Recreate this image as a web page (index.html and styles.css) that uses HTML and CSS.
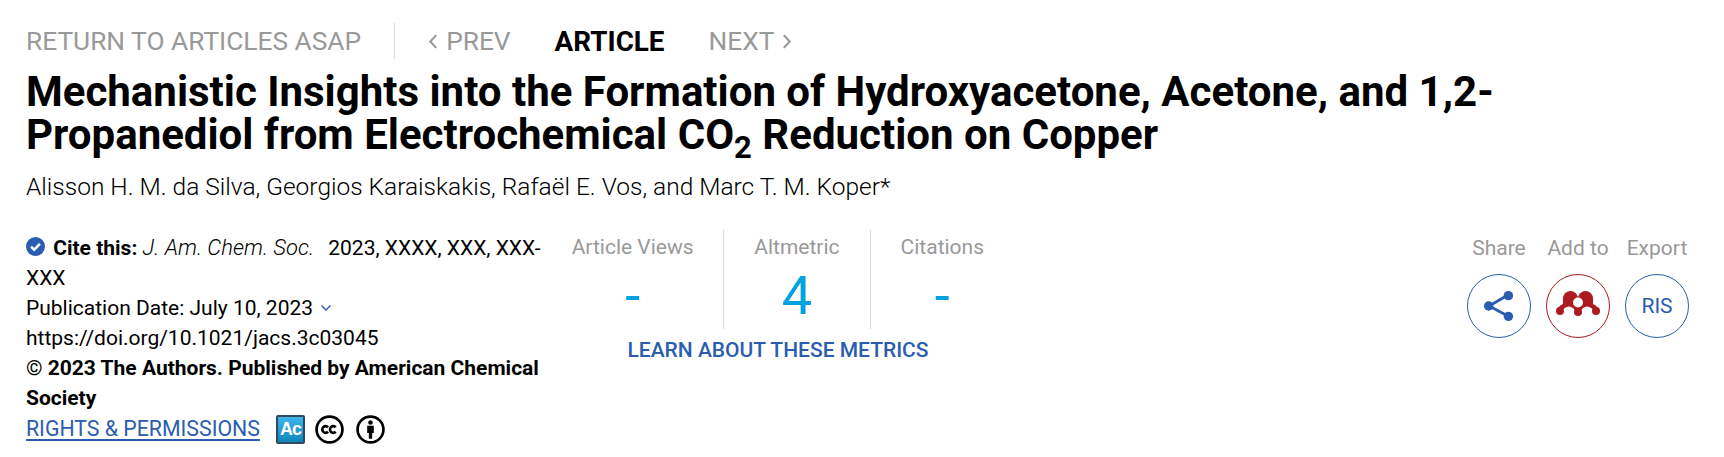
FILE: index.html
```html
<!DOCTYPE html>
<html lang="en">
<head>
    <meta charset="UTF-8">
    <title>Mechanistic Insights into the Formation of Hydroxyacetone, Acetone, and 1,2-Propanediol</title>
    <link rel="stylesheet" href="styles.css">
</head>
<body>
    <!-- Article nav -->
    <div class="article-nav">
        <a class="nav-return">RETURN TO ARTICLES ASAP</a>
        <div class="nav-pager">
            <a class="nav-link">
                <svg class="nav-chevron" viewBox="0 0 9 16"><path d="M7.5 2 2 8l5.5 6"/></svg>
                PREV
            </a>
            <a class="nav-current">ARTICLE</a>
            <a class="nav-link">
                NEXT
                <svg class="nav-chevron" viewBox="0 0 9 16"><path d="M1.5 2 7 8l-5.5 6"/></svg>
            </a>
        </div>
    </div>

    <h1 class="title">Mechanistic Insights into the Formation of Hydroxyacetone, Acetone, and 1,2-Propanediol from Electrochemical CO<sub>2</sub> Reduction on Copper</h1>
    <p class="authors">Alisson H. M. da Silva, Georgios Karaiskakis, Rafaël E. Vos, and Marc T. M. Koper*</p>

    <div class="meta-row">
        <!-- Citation -->
        <div class="cite">
            <div>
                <svg class="cite-check" viewBox="0 0 18 18">
                    <circle cx="9" cy="9" r="9"/>
                    <path d="M4.8 9.2 7.8 12l5.4-5.6"/>
                </svg>
                <b class="cite-label">Cite this:</b> <i>J. Am. Chem. Soc.</i> <span class="cite-ref">2023, XXXX, XXX, XXX-XXX</span>
            </div>
            <div>Publication Date: July 10, 2023
                <svg class="date-chevron" viewBox="0 0 12 8"><path d="M1.5 1.5 6 6l4.5-4.5"/></svg>
            </div>
            <div>https://doi.org/10.1021/jacs.3c03045</div>
            <div>© <b>2023 The Authors. Published by American Chemical Society</b></div>
            <div class="rights">
                <a class="rights-link">RIGHTS &amp; PERMISSIONS</a>
                <span class="ac-badge">Ac</span>
                <svg class="license-icon" viewBox="0 0 28 28">
                    <circle class="ring" cx="14" cy="14" r="12.500"/>
                    <path class="ring" d="M12.600 11.800a3.200 3.200 0 1 0 0 4.400M20 11.800a3.200 3.200 0 1 0 0 4.400"/>
                </svg>
                <svg class="license-icon" viewBox="0 0 28 28">
                    <circle class="ring" cx="14" cy="14" r="12.500"/>
                    <circle class="solid" cx="14" cy="7.200" r="2.200"/>
                    <path class="solid" d="M10.800 10.300h6.400v7h-1.600V23h-3.200v-5.700h-1.600z"/>
                </svg>
            </div>
        </div>

        <!-- Metrics -->
        <div class="metrics">
            <div class="metrics-row">
                <div class="metric metric-views">
                    <div class="metric-label">Article Views</div>
                    <div class="metric-value">-</div>
                </div>
                <div class="metric metric-alt">
                    <div class="metric-label">Altmetric</div>
                    <div class="metric-value">4</div>
                </div>
                <div class="metric metric-cites">
                    <div class="metric-label">Citations</div>
                    <div class="metric-value">-</div>
                </div>
            </div>
            <a class="metrics-link">LEARN ABOUT THESE METRICS</a>
        </div>

        <!-- Share / add / export -->
        <div class="actions">
            <div class="action">
                <div class="action-label">Share</div>
                <div class="action-btn">
                    <svg class="share-icon" viewBox="0 0 34 34">
                        <path d="M27 5 6.500 17 27 28"/>
                        <circle cx="27" cy="6" r="5"/>
                        <circle cx="6" cy="17" r="5"/>
                        <circle cx="27" cy="28" r="5"/>
                    </svg>
                </div>
            </div>
            <div class="action">
                <div class="action-label">Add to</div>
                <div class="action-btn action-btn-red">
                    <svg class="mendeley-icon" viewBox="0 0 44 25">
                        <circle cx="14.500" cy="7.500" r="7.500"/>
                        <circle cx="29.500" cy="7.500" r="7.500"/>
                        <path d="M7 7.500V13Q4 14 2 17L6 20Q8 16 13 15.500Q17 16 19 19.500H25Q27 16 31 15.500Q36 16 38 20L42 17Q40 14 37 13V7.500z"/>
                        <circle cx="4" cy="20" r="4"/>
                        <circle cx="22" cy="21" r="4"/>
                        <circle cx="40" cy="20" r="4"/>
                        <circle class="hole" cx="22" cy="11.500" r="5"/>
                    </svg>
                </div>
            </div>
            <div class="action">
                <div class="action-label">Export</div>
                <div class="action-btn">RIS</div>
            </div>
        </div>
    </div>
</body>
</html>
```

FILE: styles.css
```css
body {
    font-family: Roboto, "Liberation Sans", sans-serif;
    margin: 0;
    padding: 23px 26px 0;
    background: #fff;
    color: #000;
    overflow: hidden;
}
a {
    cursor: pointer;
}
.article-nav {
    display: flex;
    align-items: center;
    height: 36px;
    font-size: 26.3px;
    color: #999;
}
.nav-return {
    padding-right: 33px;
    border-right: 1px solid #d5dce3;
    line-height: 36px;
}
.nav-pager {
    display: flex;
    align-items: center;
    gap: 44px;
    margin-left: 33px;
}
.nav-link {
    display: flex;
    align-items: center;
    gap: 8px;
}
.nav-chevron {
    width: 10px;
    height: 17px;
    fill: none;
    stroke: #999;
    stroke-width: 2;
}
.nav-current {
    color: #000;
    font-size: 27.8px;
    font-weight: 700;
}
.title {
    font-size: 42px;
    line-height: 43px;
    font-weight: 700;
    margin: 11px 0 0;
    max-width: 1600px;
}
.title sub {
    font-size: 31px;
    line-height: 0;
}
.authors {
    font-size: 24.5px;
    font-weight: 300;
    line-height: 28px;
    margin: 17px 0 0;
}
.meta-row {
    display: flex;
    margin-top: 29px;
}
.cite {
    width: 516px;
    padding-top: 3px;
    font-size: 21px;
    line-height: 30px;
}
.cite-check {
    width: 19px;
    height: 19px;
    vertical-align: -1px;
    margin-right: 3px;
}
.cite-check circle {
    fill: #2a5db0;
}
.cite-check path {
    fill: none;
    stroke: #fff;
    stroke-width: 2.4;
}
.cite-label {
    font-weight: 700;
}
.cite i {
    font-size: 22px;
    font-weight: 300;
}
.cite-ref {
    margin-left: 9px;
}
.date-chevron {
    width: 12px;
    height: 8px;
    margin-left: 2px;
    vertical-align: 3px;
    fill: none;
    stroke: #2a5db0;
    stroke-width: 1.4;
}
.cite b {
    font-weight: 700;
}
.rights {
    display: flex;
    align-items: center;
    height: 30px;
    margin-top: 1px;
}
.rights-link {
    color: #2a5db0;
    font-size: 21.3px;
    text-decoration: underline;
    text-decoration-thickness: 2px;
    text-underline-offset: 3px;
    margin-right: 16px;
}
.ac-badge {
    box-sizing: border-box;
    width: 29px;
    height: 29px;
    margin-right: 10px;
    border: 2px solid #2d4a5e;
    border-radius: 2px;
    background: linear-gradient(#3fb4ec, #0f86bd);
    color: #fff;
    font: 700 18px/25px "Liberation Sans", sans-serif;
    letter-spacing: -1px;
    text-align: center;
}
.license-icon {
    width: 29px;
    height: 29px;
    margin-right: 12px;
}
.ring {
    fill: none;
    stroke: #000;
    stroke-width: 2.6;
}
.solid {
    fill: #000;
}
.metrics {
    width: 472px;
    text-align: center;
}
.metrics-row {
    display: flex;
}
.metric {
    height: 99px;
    border-right: 1px solid #d5dce3;
}
.metric-views {
    width: 182px;
}
.metric-alt {
    width: 146px;
}
.metric-cites {
    width: 144px;
    border-right: none;
}
.metric-label {
    font-size: 21px;
    line-height: 34px;
    color: #999;
}
.metric-value {
    font-size: 54px;
    line-height: 60px;
    margin-top: 2px;
    color: #00a3e0;
}
.metrics-link {
    display: block;
    margin-top: 6px;
    font-size: 21px;
    font-weight: 500;
    line-height: 30px;
    color: #2a5db0;
}
.actions {
    display: flex;
    gap: 15px;
    margin-left: auto;
    margin-right: 9px;
    padding-top: 3px;
}
.action {
    width: 64px;
    text-align: center;
}
.action-label {
    font-size: 21px;
    line-height: 30px;
    color: #999;
    white-space: nowrap;
}
.action-btn {
    box-sizing: border-box;
    display: flex;
    align-items: center;
    justify-content: center;
    width: 64px;
    height: 64px;
    margin-top: 11px;
    border: 1px solid #2a5db0;
    border-radius: 50%;
    color: #2a5db0;
    font-size: 21px;
}
.action-btn-red {
    border-color: #ad1a1f;
}
.share-icon {
    width: 32px;
    height: 32px;
    fill: #2a5db0;
}
.share-icon path {
    fill: none;
    stroke: #2a5db0;
    stroke-width: 3;
}
.mendeley-icon {
    width: 44px;
    height: 25px;
    margin-bottom: 5px;
    fill: #ad1a1f;
}
.mendeley-icon .hole {
    fill: #fff;
}
```
